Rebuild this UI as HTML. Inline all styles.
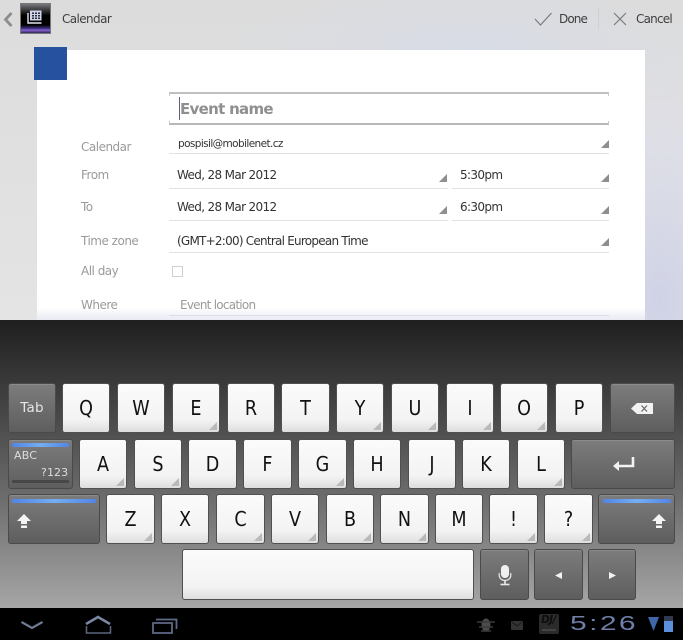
<!DOCTYPE html>
<html><head><meta charset="utf-8">
<style>
html,body{margin:0;padding:0;background:#000}
#s{position:relative;width:683px;height:640px;overflow:hidden;font-family:"DejaVu Sans","Liberation Sans",sans-serif;background:#000}
#s div,#s svg{position:absolute}
.t{white-space:nowrap;line-height:16px}
#top{left:0;top:0;width:683px;height:320px;background:radial-gradient(ellipse 130px 260px at 660px 300px,#cfd2e6 0%,rgba(220,222,235,.6) 60%,rgba(224,225,230,0) 100%),radial-gradient(ellipse 250px 70px at 470px 50px,#d8dce6 0%,rgba(222,224,230,0) 100%),linear-gradient(#dcdcdc,#e4e4e4)}
#card{left:37px;top:50px;width:608px;height:270px;background:#fff}
#fade{left:37px;top:308px;width:608px;height:12px;background:linear-gradient(rgba(255,255,255,0),rgba(225,226,240,.75))}
.l{left:81px;color:#9a9a9a;font-size:12px;letter-spacing:-.5px}
.v{color:#333;font-size:12px;letter-spacing:-.65px}
.ul{height:1px;background:#e2e2e2}
.tr{width:0;height:0;border-style:solid;border-width:0 0 8px 8px;border-color:transparent transparent #8e8e8e transparent}
#kb{left:0;top:320px;width:683px;height:288px;background:linear-gradient(#1f1f1f 0%,#3a3a3a 22%,#6a6a6a 60%,#a6a6a6 100%)}
.k{box-sizing:border-box;border:1px solid #505050;border-radius:3px;background:linear-gradient(#fbfbfb 0%,#f3f3f3 75%,#dedede 100%);color:#111;font-size:20px;text-align:center}
.k span{display:block;line-height:48px;transform:scaleX(.88)}
.k i{position:absolute;right:2px;bottom:2px;width:0;height:0;border-style:solid;border-width:0 0 8px 8px;border-color:transparent transparent #b9b9b9 transparent}
.d{box-sizing:border-box;border:1px solid #4a4a4a;border-radius:3px;background:linear-gradient(#7c7c7c,#5e5e5e);color:#e6e6e6;box-shadow:inset 0 1px 0 rgba(255,255,255,.12)}
.bar{height:4px;border-radius:1px;background:linear-gradient(90deg,#5384e6,#74aef0 50%,#5384e6)}
#nav{left:0;top:608px;width:683px;height:32px;background:#000}
</style></head>
<body><div id="s">
<div id="top"></div>
<div id="card"></div>
<div style="left:34px;top:47px;width:33px;height:33px;background:#25519f"></div>

<!-- action bar -->
<svg style="left:2px;top:11px" width="12" height="17" viewBox="0 0 12 17"><path d="M9.5 2L3.5 8.5L9.5 15" fill="none" stroke="#8d8d8d" stroke-width="2.8"/></svg>
<div style="left:20px;top:3px;width:31px;height:31px;background:linear-gradient(#77777c 0%,#000 40%,#000 72%,#3a2f7c 84%,#8a5fd0 90%,#2c2c5a 100%);border:.5px solid #777;box-sizing:border-box"></div>
<svg style="left:26px;top:9px" width="18" height="18" viewBox="0 0 18 18"><path d="M4 1.5H15.5V11.5H4Z" fill="#cfd6ea"/><path d="M6 3.5h2v1.5H6zM9 3.5h2v1.5H9zM12 3.5h2v1.5h-2zM6 6h2v1.5H6zM9 6h2v1.5H9zM12 6h2v1.5h-2zM6 8.5h2V10H6zM9 8.5h2V10H9zM12 8.5h2V10h-2z" fill="#2a2a40"/><path d="M2 4V14H15.5" fill="none" stroke="#e4e4ee" stroke-width="1.4"/></svg>
<div class="t" style="left:62px;top:11px;font-size:12px;color:#3e3e3e;letter-spacing:-.6px">Calendar</div>
<svg style="left:533px;top:11px" width="20" height="16" viewBox="0 0 20 16"><path d="M2 8L7.5 14L18.5 2" fill="none" stroke="#7a7a7a" stroke-width="1.2"/></svg>
<div class="t" style="left:559px;top:11px;font-size:12px;color:#3e3e3e;letter-spacing:-.9px">Done</div>
<div style="left:598px;top:8px;width:1px;height:21px;background:#d0d0d0"></div>
<svg style="left:612px;top:11px" width="16" height="16" viewBox="0 0 16 16"><path d="M2 2L14 14M14 2L2 14" fill="none" stroke="#7a7a7a" stroke-width="1.2"/></svg>
<div class="t" style="left:636px;top:11px;font-size:12px;color:#3e3e3e;letter-spacing:-.8px">Cancel</div>

<!-- form -->
<div style="left:169px;top:92px;width:440px;height:2px;background:#c0c0c0"></div>
<div style="left:169px;top:123px;width:440px;height:2px;background:#b8b8b8"></div>
<div style="left:169px;top:92px;width:1px;height:4px;background:#c8c8c8"></div>
<div style="left:169px;top:121px;width:1px;height:3px;background:#c8c8c8"></div>
<div style="left:608px;top:92px;width:1px;height:4px;background:#c8c8c8"></div>
<div style="left:608px;top:121px;width:1px;height:3px;background:#c8c8c8"></div>
<div class="t" style="left:180px;top:101px;font-size:15px;font-weight:bold;color:#8f8f8f;letter-spacing:-.7px">Event name</div>
<div style="left:179px;top:97px;width:1px;height:23px;background:#5c6280"></div>

<div class="t l" style="top:139px">Calendar</div>
<div class="t v" style="left:178px;top:136px;font-size:10.5px;letter-spacing:-.6px">pospisil@mobilenet.cz</div>
<div class="ul" style="left:169px;top:153px;width:440px"></div>
<div class="tr" style="left:601px;top:140px"></div>

<div class="t l" style="top:167px">From</div>
<div class="t v" style="left:177px;top:167px">Wed, 28 Mar 2012</div>
<div class="ul" style="left:169px;top:188px;width:279px"></div>
<div class="tr" style="left:439px;top:174px"></div>
<div class="t v" style="left:460px;top:167px">5:30pm</div>
<div class="ul" style="left:452px;top:188px;width:157px"></div>
<div class="tr" style="left:601px;top:174px"></div>

<div class="t l" style="top:199px">To</div>
<div class="t v" style="left:177px;top:199px">Wed, 28 Mar 2012</div>
<div class="ul" style="left:169px;top:220px;width:279px"></div>
<div class="tr" style="left:439px;top:206px"></div>
<div class="t v" style="left:460px;top:199px">6:30pm</div>
<div class="ul" style="left:452px;top:220px;width:157px"></div>
<div class="tr" style="left:601px;top:206px"></div>

<div class="t l" style="top:233px">Time zone</div>
<div class="t v" style="left:177px;top:233px;letter-spacing:-.76px">(GMT+2:00) Central European Time</div>
<div class="ul" style="left:169px;top:252px;width:440px"></div>
<div class="tr" style="left:601px;top:238px"></div>

<div class="t l" style="top:263px">All day</div>
<div style="left:172px;top:266px;width:11px;height:11px;box-sizing:border-box;border:1px solid #d0d0d0"></div>

<div class="t l" style="top:297px">Where</div>
<div class="t" style="left:180px;top:297px;font-size:12px;color:#9a9a9a;letter-spacing:-.75px">Event location</div>
<div class="ul" style="left:169px;top:315px;width:440px;background:#d8d8dc"></div>
<div id="fade"></div>

<!-- keyboard -->
<div id="kb"></div>

<div class="d t" style="left:8px;top:383px;width:48px;height:50px;line-height:48px;text-align:center;font-size:13.5px;letter-spacing:.2px">Tab</div>
<div class="k" style="left:62px;top:383px;width:48px;height:50px"><span>Q</span></div>
<div class="k" style="left:117px;top:383px;width:48px;height:50px"><span>W</span></div>
<div class="k" style="left:172px;top:383px;width:48px;height:50px"><span>E</span><i></i></div>
<div class="k" style="left:227px;top:383px;width:48px;height:50px"><span>R</span></div>
<div class="k" style="left:281px;top:383px;width:49px;height:50px"><span>T</span></div>
<div class="k" style="left:336px;top:383px;width:48px;height:50px"><span>Y</span><i></i></div>
<div class="k" style="left:391px;top:383px;width:48px;height:50px"><span>U</span><i></i></div>
<div class="k" style="left:446px;top:383px;width:48px;height:50px"><span>I</span><i></i></div>
<div class="k" style="left:500px;top:383px;width:48px;height:50px"><span>O</span><i></i></div>
<div class="k" style="left:555px;top:383px;width:48px;height:50px"><span>P</span></div>
<div class="d" style="left:610px;top:383px;width:65px;height:50px"></div>
<svg style="left:630px;top:402px" width="24" height="13" viewBox="0 0 24 13"><path d="M1 6.5L7 1H23V12H7Z" fill="#f2f2f2"/><path d="M11.5 3.5L17 9.5M17 3.5L11.5 9.5" stroke="#666" stroke-width="1.2" fill="none"/></svg>

<div class="d" style="left:8px;top:439px;width:65px;height:50px"></div>
<div class="bar" style="left:12px;top:443px;width:57px"></div>
<div style="left:12px;top:480px;width:57px;height:3px;border-radius:1px;background:#474747"></div>
<div class="t" style="left:14px;top:448px;font-size:11px;color:#ddd;letter-spacing:.2px">ABC</div>
<div class="t" style="left:41px;top:465px;font-size:11px;color:#ddd;letter-spacing:.1px">?123</div>
<div class="k" style="left:79px;top:439px;width:48px;height:50px"><span>A</span><i></i></div>
<div class="k" style="left:134px;top:439px;width:48px;height:50px"><span>S</span><i></i></div>
<div class="k" style="left:188px;top:439px;width:49px;height:50px"><span>D</span></div>
<div class="k" style="left:243px;top:439px;width:49px;height:50px"><span>F</span></div>
<div class="k" style="left:298px;top:439px;width:49px;height:50px"><span>G</span><i></i></div>
<div class="k" style="left:353px;top:439px;width:48px;height:50px"><span>H</span></div>
<div class="k" style="left:408px;top:439px;width:48px;height:50px"><span>J</span></div>
<div class="k" style="left:462px;top:439px;width:48px;height:50px"><span>K</span></div>
<div class="k" style="left:517px;top:439px;width:48px;height:50px"><span>L</span><i></i></div>
<div class="d" style="left:571px;top:439px;width:104px;height:50px"></div>
<svg style="left:612px;top:456px" width="24" height="16" viewBox="0 0 24 16"><path d="M21 1V10H5" fill="none" stroke="#f2f2f2" stroke-width="2.6"/><path d="M1 10L7 5V15Z" fill="#f2f2f2"/></svg>

<div class="d" style="left:8px;top:494px;width:92px;height:50px"></div>
<div class="bar" style="left:12px;top:499px;width:84px"></div>
<svg style="left:16px;top:513px" width="16" height="16" viewBox="0 0 16 16"><path d="M8 1L15 8H11V11H5V8H1Z" fill="#f4f4f4"/><path d="M5 12.5H11V15H5Z" fill="#f4f4f4"/></svg>
<div class="k" style="left:106px;top:494px;width:49px;height:50px"><span>Z</span><i></i></div>
<div class="k" style="left:161px;top:494px;width:48px;height:50px"><span>X</span></div>
<div class="k" style="left:216px;top:494px;width:49px;height:50px"><span>C</span><i></i></div>
<div class="k" style="left:271px;top:494px;width:48px;height:50px"><span>V</span><i></i></div>
<div class="k" style="left:326px;top:494px;width:48px;height:50px"><span>B</span><i></i></div>
<div class="k" style="left:380px;top:494px;width:49px;height:50px"><span>N</span><i></i></div>
<div class="k" style="left:435px;top:494px;width:48px;height:50px"><span>M</span></div>
<div class="k" style="left:489px;top:494px;width:49px;height:50px"><span>!</span><i></i></div>
<div class="k" style="left:544px;top:494px;width:49px;height:50px"><span>?</span><i></i></div>
<div class="d" style="left:598px;top:494px;width:77px;height:50px"></div>
<div class="bar" style="left:603px;top:499px;width:68px"></div>
<svg style="left:651px;top:513px" width="16" height="16" viewBox="0 0 16 16"><path d="M8 1L15 8H11V11H5V8H1Z" fill="#f4f4f4"/><path d="M5 12.5H11V15H5Z" fill="#f4f4f4"/></svg>

<div class="k" style="left:182px;top:549px;width:292px;height:51px"></div>
<div class="d" style="left:480px;top:549px;width:49px;height:51px"></div>
<svg style="left:498px;top:564px" width="14" height="23" viewBox="0 0 14 23"><rect x="3" y="1" width="8" height="13" rx="4" fill="#f0f0f0"/><path d="M1.2 9V11C1.2 14.5 4 16.5 7 16.5S12.8 14.5 12.8 11V9" fill="none" stroke="#e8e8e8" stroke-width="1.2"/><path d="M7 16.5V20" stroke="#e8e8e8" stroke-width="1.6"/><path d="M2.5 20.5H11.5" stroke="#e8e8e8" stroke-width="1.6"/></svg>
<div class="d" style="left:534px;top:549px;width:49px;height:51px"></div>
<svg style="left:554px;top:571px" width="9" height="9" viewBox="0 0 9 9"><path d="M1 4.5L8 1V8Z" fill="#f2f2f2"/></svg>
<div class="d" style="left:588px;top:549px;width:48px;height:51px"></div>
<svg style="left:608px;top:571px" width="9" height="9" viewBox="0 0 9 9"><path d="M8 4.5L1 1V8Z" fill="#f2f2f2"/></svg>

<!-- nav bar -->
<div id="nav"></div>
<svg style="left:0;top:608px" width="200" height="32" viewBox="0 0 200 32">
<path d="M21.5 14L32 20L42.5 14" fill="none" stroke="#6f7a96" stroke-width="2.2"/>
<path d="M86 16L98 9L110 16" fill="none" stroke="#7b86a3" stroke-width="2.6"/>
<path d="M86.5 18V25H110.5V18" fill="none" stroke="#5c6680" stroke-width="1.5"/>
<path d="M153 15H172V25H153Z" fill="none" stroke="#5f6a86" stroke-width="1.8"/>
<path d="M156 11.5H176.5V21" fill="none" stroke="#5f6a86" stroke-width="1.8"/>
</svg>
<svg style="left:476px;top:616px" width="20" height="18" viewBox="0 0 20 18"><ellipse cx="10" cy="9" rx="4.5" ry="6.5" fill="#4c4c4c"/><path d="M1 6H19M3 11H17M5 15H15" stroke="#3a3a3a" stroke-width="1.4"/></svg>
<div style="left:511px;top:621px;width:12px;height:9px;background:#333;border-radius:1px"></div>
<svg style="left:511px;top:621px" width="12" height="9" viewBox="0 0 12 9"><path d="M1 1L6 5L11 1" fill="none" stroke="#1a1a1a" stroke-width="1"/></svg>
<div style="left:539px;top:614px;width:20px;height:20px;background:#2b2b2b;border-radius:2px"></div>
<div class="t" style="left:541px;top:613px;font-size:10.5px;line-height:14px;font-weight:bold;font-style:italic;color:#0d0d0d;letter-spacing:-.5px">DJ/</div>
<div style="left:542px;top:629px;width:14px;height:2px;background:#444"></div>
<div class="t" style="left:570px;top:612px;font-size:20px;line-height:24px;color:#6f7fa8;letter-spacing:1.6px;transform:scaleX(1.5);transform-origin:0 0;font-weight:normal;font-family:'Liberation Sans',sans-serif">5:26</div>
<svg style="left:647px;top:616px" width="14" height="16" viewBox="0 0 14 16"><path d="M1 1H12L6.5 15Z" fill="#3e66a8"/></svg>
<div style="left:664px;top:621px;width:9px;height:11px;background:#5b8fdc"></div>
<div style="left:664px;top:616px;width:9px;height:5px;background:#2f3a50"></div>
</div></body></html>
